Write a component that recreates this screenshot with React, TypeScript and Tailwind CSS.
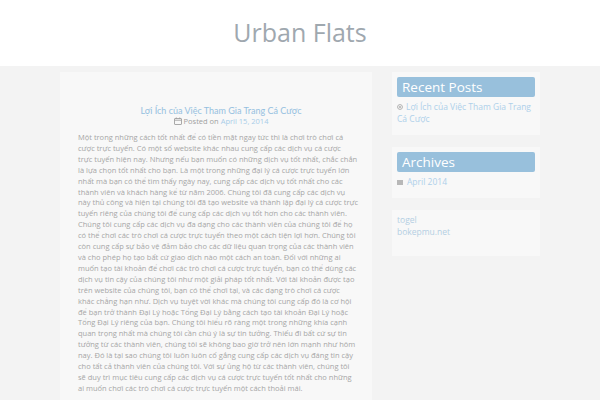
const lines = [
  'Một trong những cách tốt nhất để có tiền mặt ngay tức thì là chơi trò chơi cá',
  'cược trực tuyến. Có một số website khác nhau cung cấp các dịch vụ cá cược',
  'trực tuyến hiện nay. Nhưng nếu bạn muốn có những dịch vụ tốt nhất, chắc chắn',
  'là lựa chọn tốt nhất cho bạn. Là một trong những đại lý cá cược trực tuyến lớn',
  'nhất mà bạn có thể tìm thấy ngày nay, cung cấp các dịch vụ tốt nhất cho các',
  'thành viên và khách hàng kể từ năm 2006. Chúng tôi đã cung cấp các dịch vụ',
  'này thủ công và hiện tại chúng tôi đã tạo website và thành lập đại lý cá cược trực',
  'tuyến riêng của chúng tôi để cung cấp các dịch vụ tốt hơn cho các thành viên.',
  'Chúng tôi cung cấp các dịch vụ đa dạng cho các thành viên của chúng tôi để họ',
  'có thể chơi các trò chơi cá cược trực tuyến theo một cách tiện lợi hơn. Chúng tôi',
  'còn cung cấp sự bảo vệ đảm bảo cho các dữ liệu quan trọng của các thành viên',
  'và cho phép họ tạo bất cứ giao dịch nào một cách an toàn. Đối với những ai',
  'muốn tạo tài khoản để chơi các trò chơi cá cược trực tuyến, bạn có thể dùng các',
  'dịch vụ tin cậy của chúng tôi như một giải pháp tốt nhất. Với tài khoản được tạo',
  'trên website của chúng tôi, bạn có thể chơi tại, và các dạng trò chơi cá cược',
  'khác chẳng hạn như. Dịch vụ tuyệt vời khác mà chúng tôi cung cấp đó là cơ hội',
  'để bạn trở thành Đại Lý hoặc Tổng Đại Lý bằng cách tạo tài khoản Đại Lý hoặc',
  'Tổng Đại Lý riêng của bạn. Chúng tôi hiểu rõ ràng một trong những khía cạnh',
  'quan trọng nhất mà chúng tôi cần chú ý là sự tin tưởng. Thiếu đi bất cứ sự tin',
  'tưởng từ các thành viên, chúng tôi sẽ không bao giờ trở nên lớn mạnh như hôm',
  'nay. Đó là tại sao chúng tôi luôn luôn cố gắng cung cấp các dịch vụ đáng tin cậy',
  'cho tất cả thành viên của chúng tôi. Với sự ủng hộ từ các thành viên, chúng tôi',
  'sẽ duy trì mục tiêu cung cấp các dịch vụ cá cược trực tuyến tốt nhất cho những',
  'ai muốn chơi các trò chơi cá cược trực tuyến một cách thoải mái.',
]

function Widget({ title, children }: { title: string; children: React.ReactNode }) {
  return (
    <div className="bg-[#f8f8f8] px-[5px] pt-[5px] pb-[10px]">
      <h3 className="h-[20px] rounded-[2px] bg-[#98c0dc] px-[5px] text-[13.5px] leading-[20px] text-white">{title}</h3>
      <div className="pt-[4px] text-[8.5px] leading-[12px]">{children}</div>
    </div>
  )
}

export default function App() {
  return (
    <div className="min-h-[400px] bg-[#f3f3f3] font-['Open_Sans',sans-serif]">
      <header className="flex h-[66px] items-center justify-center bg-white">
        <h1 className="text-[25px] text-[#9fa8af]">Urban Flats</h1>
      </header>

      <div className="mx-auto flex w-[480px] gap-[20px] pt-[6px]">
        <main className="w-[312px] bg-[#f8f8f8] pr-[8px] pl-[18px] pt-[33px] pb-[10px]">
          <h2 className="text-center font-['Lato',sans-serif] text-[9px] leading-[11px] text-[#95c0e0]">
            Lợi Ích của Việc Tham Gia Trang Cá Cược
          </h2>
          <p className="flex items-center justify-center gap-[2px] text-[7.5px] leading-[10px] text-[#a0a0a0]">
            <svg width="8" height="8" viewBox="0 0 8 8" fill="none" stroke="#a0a0a0" strokeWidth="0.9">
              <rect x="0.5" y="1.5" width="7" height="6" rx="0.5" />
              <line x1="0.5" y1="3.2" x2="7.5" y2="3.2" />
              <line x1="2.3" y1="0.5" x2="2.3" y2="2" />
              <line x1="5.7" y1="0.5" x2="5.7" y2="2" />
            </svg>
            Posted on <span className="text-[#a8cde8]">April 15, 2014</span>
          </p>
          <p className="mt-[6px] whitespace-nowrap text-[7.5px] leading-[10.9px] text-[#a6a6a6]">
            {lines.map((l, i) => (
              <span key={i} className="block">{l}</span>
            ))}
          </p>
        </main>

        <aside className="flex w-[148px] flex-col gap-[12px]">
          <Widget title="Recent Posts">
            <p className="text-[#aed0ea]">
              <svg width="6" height="6" viewBox="0 0 6 6" fill="none" stroke="#b0b0b0" strokeWidth="1" className="mr-[3px] inline-block align-[0px]">
                <circle cx="3" cy="3" r="2.4" />
                <circle cx="3" cy="3" r="0.6" fill="#b0b0b0" />
              </svg>
              Lợi Ích của Việc Tham Gia Trang Cá Cược
            </p>
          </Widget>
          <Widget title="Archives">
            <p className="flex items-center gap-[4px] text-[#aed0ea]">
              <span className="inline-block h-[5px] w-[6px] bg-[#b8b8b8]" />
              April 2014
            </p>
          </Widget>
          <div className="bg-[#f8f8f8] px-[5px] pt-[4px] pb-[18px] text-[8.5px] leading-[12px] text-[#b4cfe3]">
            <p>togel</p>
            <p>bokepmu.net</p>
          </div>
        </aside>
      </div>
    </div>
  )
}
